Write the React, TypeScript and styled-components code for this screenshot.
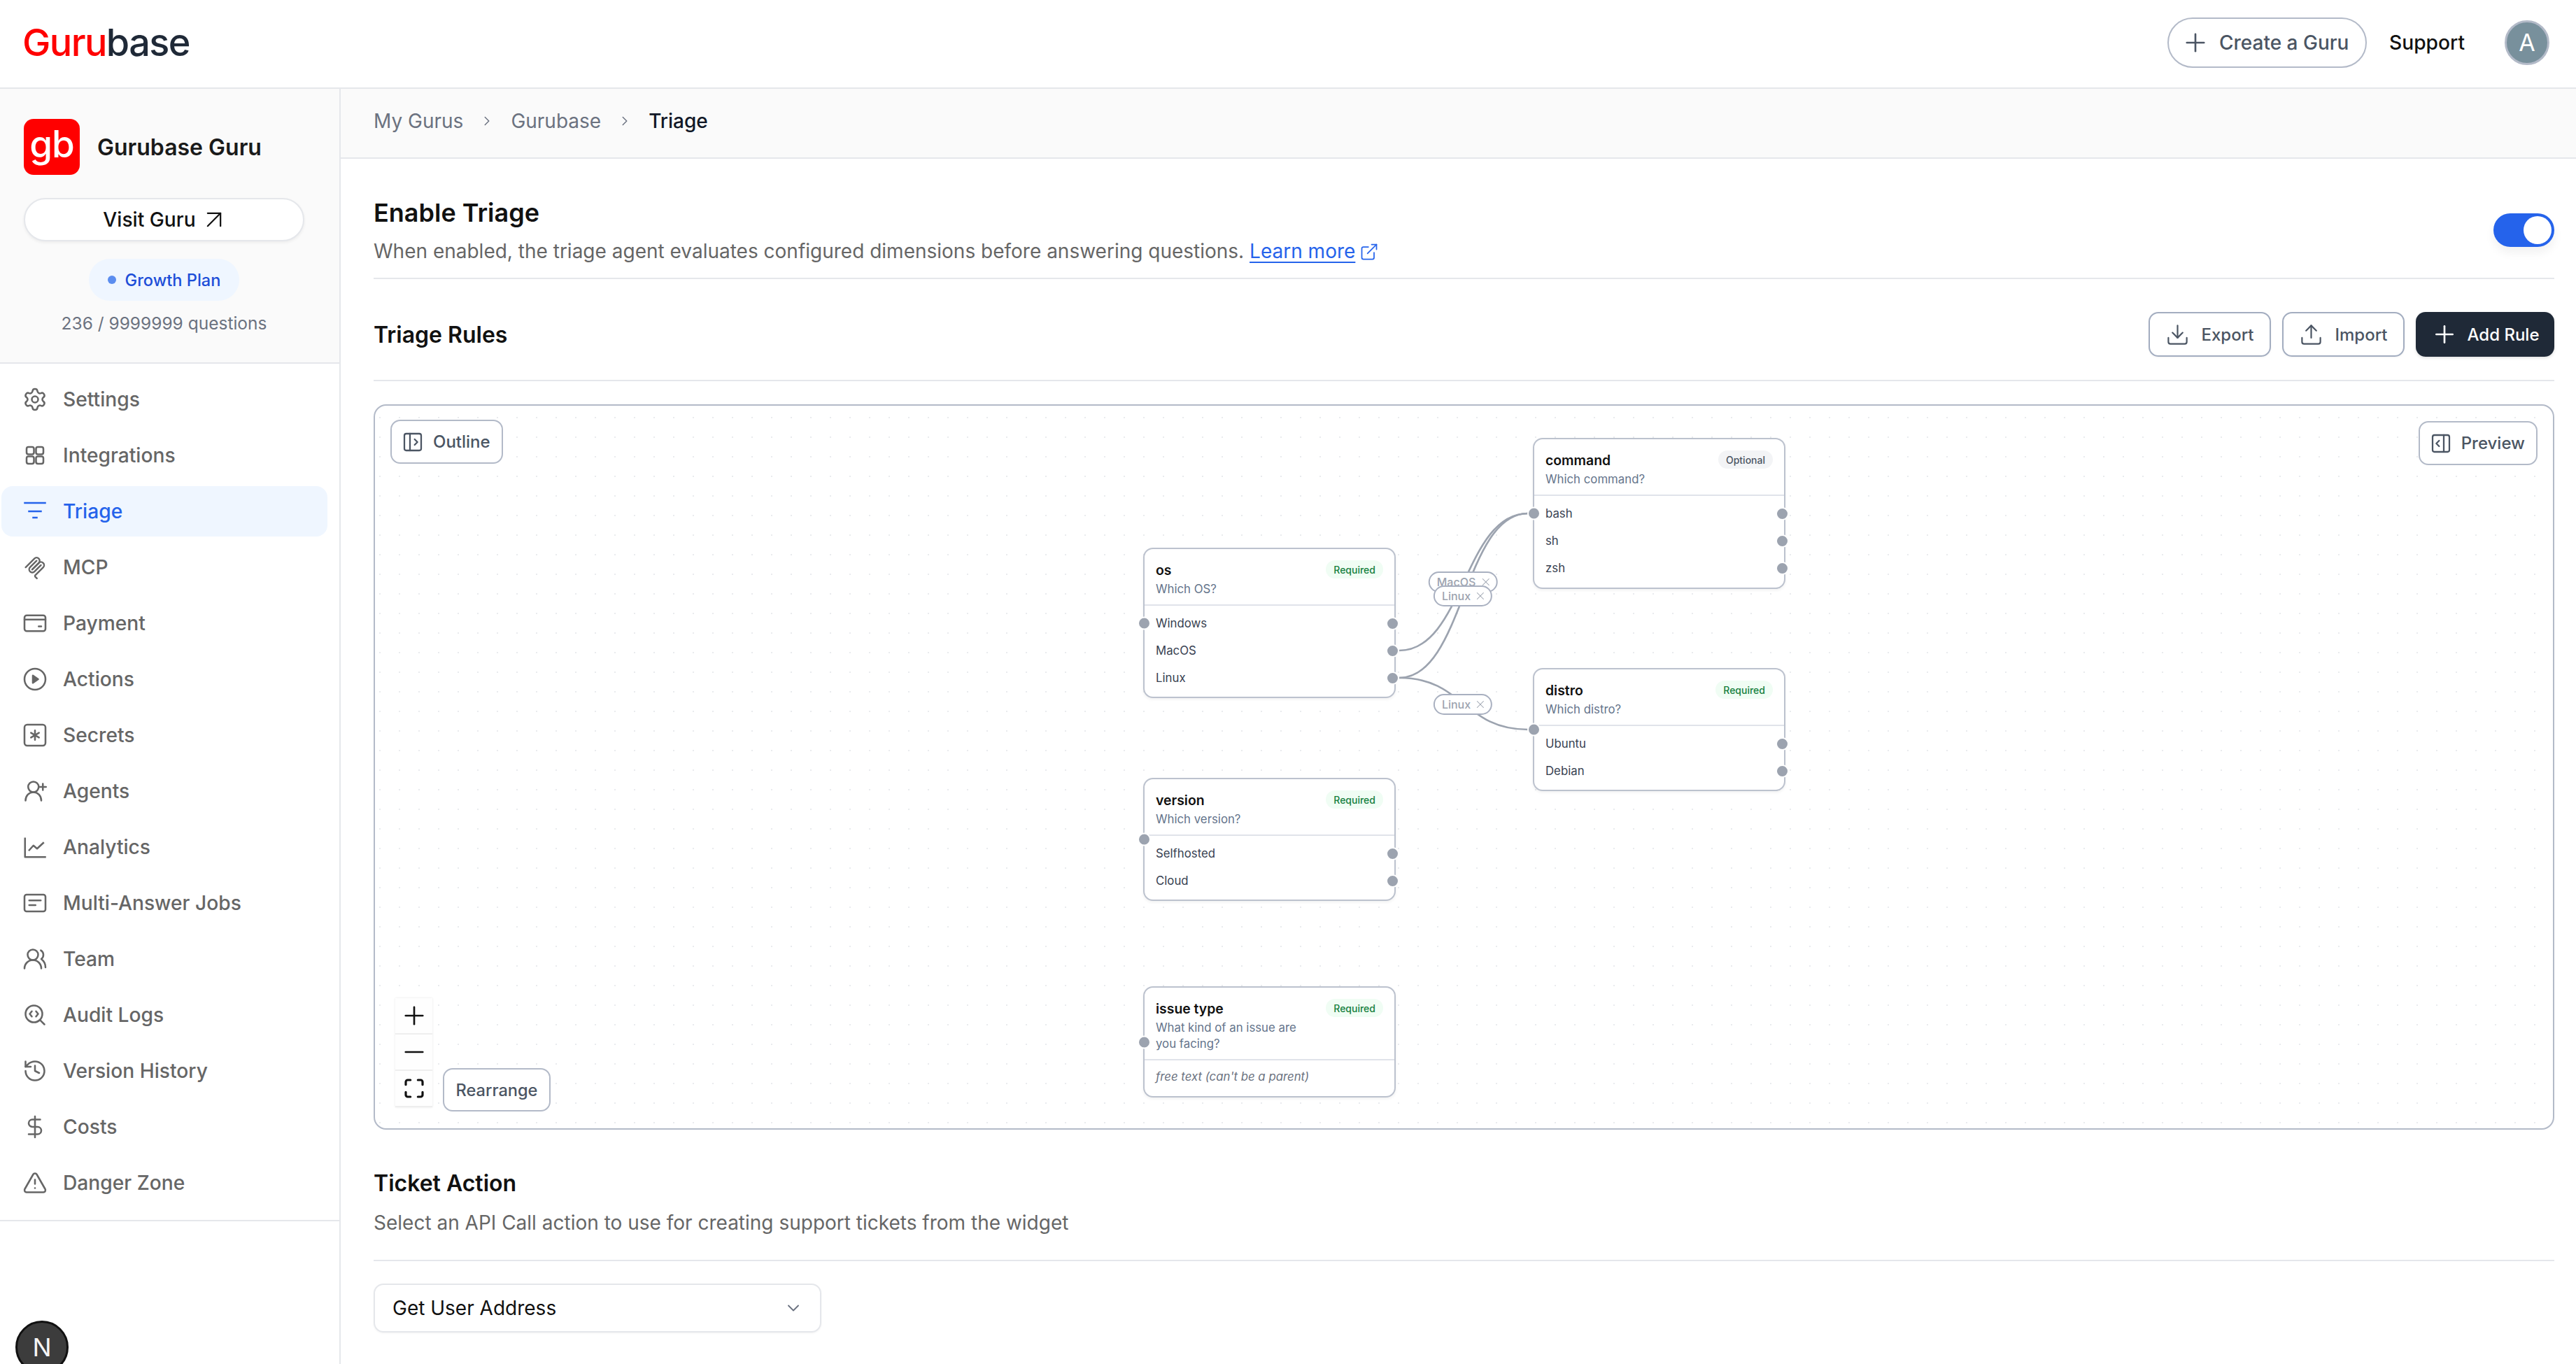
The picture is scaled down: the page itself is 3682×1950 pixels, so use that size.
import styled, { createGlobalStyle } from "styled-components";
import {
  ArrowUpRight,
  ChevronDown,
  ChevronRight,
  DollarSign,
  Download,
  ExternalLink,
  History,
  Minus,
  PanelLeftOpen,
  PanelRightOpen,
  Plus,
  SearchCode,
  Settings,
  TriangleAlert,
  Upload,
  UsersRound,
  X,
} from "lucide-react";

const NAV_STROKE = 1.7;

const GridIcon = () => (
  <svg viewBox="0 0 24 24" fill="none" stroke="currentColor" strokeWidth={NAV_STROKE}>
    <rect x="4" y="4" width="7" height="7" rx="1.8" />
    <rect x="13" y="4" width="7" height="7" rx="1.8" />
    <rect x="4" y="13" width="7" height="7" rx="1.8" />
    <rect x="13" y="13" width="7" height="7" rx="1.8" />
  </svg>
);

const FilterIcon = () => (
  <svg viewBox="0 0 24 24" fill="none" stroke="currentColor" strokeWidth={NAV_STROKE}>
    <path d="M1.5 4h21M5.5 12h13M9.5 18h5" />
  </svg>
);

const McpIcon = () => (
  <svg viewBox="0 0 195 195" fill="none" stroke="currentColor" strokeWidth="13" strokeLinecap="round">
    <path d="M25 97.85L92.88 29.97C102.25 20.6 117.45 20.6 126.82 29.97C136.2 39.34 136.2 54.54 126.82 63.91L75.56 115.18" />
    <path d="M76.27 114.47L126.82 63.91C136.2 54.54 151.39 54.54 160.77 63.91L161.12 64.27C170.49 73.64 170.49 88.83 161.12 98.21L99.72 159.6C96.6 162.72 96.6 167.79 99.72 170.91L112.33 183.52" />
    <path d="M109.85 46.94L59.65 97.15C50.28 106.52 50.28 121.71 59.65 131.09C69.02 140.46 84.22 140.46 93.59 131.09L143.79 80.88" />
  </svg>
);

const WalletIcon = () => (
  <svg viewBox="0 0 24 24" fill="none" stroke="currentColor" strokeWidth={NAV_STROKE} strokeLinecap="round">
    <rect x="2" y="4.5" width="20" height="15" rx="2.2" />
    <path d="M2 8.5h20M15.5 15h2.5" />
  </svg>
);

const PlayIcon = () => (
  <svg viewBox="0 0 24 24" fill="none" stroke="currentColor" strokeWidth={NAV_STROKE} strokeLinejoin="round">
    <circle cx="12" cy="12" r="10" />
    <path d="M10 8.5l5 3.5-5 3.5z" fill="currentColor" />
  </svg>
);

const SecretIcon = () => (
  <svg viewBox="0 0 24 24" fill="none" stroke="currentColor" strokeWidth={NAV_STROKE} strokeLinecap="round">
    <rect x="2" y="2" width="20" height="20" rx="2.6" />
    <path d="M12 7.5v9M8.2 9.8l7.6 4.4M15.8 9.8l-7.6 4.4" />
  </svg>
);

const AgentIcon = () => (
  <svg viewBox="0 0 24 24" fill="none" stroke="currentColor" strokeWidth={NAV_STROKE} strokeLinecap="round">
    <circle cx="10.5" cy="8" r="5" />
    <path d="M3 21c0-4.5 3.4-8 7.5-8s7.5 3.5 7.5 8M19.5 5v6M16.5 8h6" />
  </svg>
);

const ChartIcon = () => (
  <svg viewBox="0 0 24 24" fill="none" stroke="currentColor" strokeWidth={NAV_STROKE} strokeLinejoin="round">
    <path d="M2.5 3v18.5h20" />
    <path d="M6 15.5l4.5-5 3.5 3 6.5-6" />
  </svg>
);

const JobsIcon = () => (
  <svg viewBox="0 0 24 24" fill="none" stroke="currentColor" strokeWidth={NAV_STROKE} strokeLinecap="round">
    <rect x="2" y="4" width="20" height="16" rx="2" />
    <path d="M6.5 9.5h11M6.5 14h6" />
  </svg>
);

const FocusIcon = () => (
  <svg viewBox="0 0 24 24" width="32" height="32" fill="none" stroke="currentColor" strokeWidth="2.4" strokeLinecap="round">
    <path d="M3 8V5a2 2 0 0 1 2-2h3M16 3h3a2 2 0 0 1 2 2v3M21 16v3a2 2 0 0 1-2 2h-3M8 21H5a2 2 0 0 1-2-2v-3" />
  </svg>
);

const navItems = [
  { label: "Settings", icon: <Settings strokeWidth={NAV_STROKE} /> },
  { label: "Integrations", icon: <GridIcon /> },
  { label: "Triage", icon: <FilterIcon />, active: true },
  { label: "MCP", icon: <McpIcon /> },
  { label: "Payment", icon: <WalletIcon /> },
  { label: "Actions", icon: <PlayIcon /> },
  { label: "Secrets", icon: <SecretIcon /> },
  { label: "Agents", icon: <AgentIcon /> },
  { label: "Analytics", icon: <ChartIcon /> },
  { label: "Multi-Answer Jobs", icon: <JobsIcon /> },
  { label: "Team", icon: <UsersRound strokeWidth={NAV_STROKE} /> },
  { label: "Audit Logs", icon: <SearchCode strokeWidth={NAV_STROKE} /> },
  { label: "Version History", icon: <History strokeWidth={NAV_STROKE} /> },
  { label: "Costs", icon: <DollarSign strokeWidth={NAV_STROKE} /> },
  { label: "Danger Zone", icon: <TriangleAlert strokeWidth={NAV_STROKE} /> },
];

// the canvas inner box starts at page x 536, y 580
const CANVAS_X = 536;
const CANVAS_Y = 580;

const nodes = [
  { name: "os", question: "Which OS?", badge: "Required", x: 1634, y: 783, h: 215, options: ["Windows", "MacOS", "Linux"] },
  { name: "command", question: "Which command?", badge: "Optional", x: 2191, y: 626, h: 216, options: ["bash", "sh", "zsh"] },
  { name: "distro", question: "Which distro?", badge: "Required", x: 2191, y: 955, h: 176, options: ["Ubuntu", "Debian"] },
  { name: "version", question: "Which version?", badge: "Required", x: 1634, y: 1112, h: 176, options: ["Selfhosted", "Cloud"] },
  { name: "issue type", question: "What kind of an issue are you facing?", badge: "Required", x: 1634, y: 1410, h: 159, options: [] },
];

const edges = [
  "M2000 930C2092 930 2092 734 2184 734",
  "M2000 969C2092 969 2092 734 2184 734",
  "M2000 969C2092 969 2092 1043 2184 1043",
];

const edgeLabels = [
  { text: "MacOS", x: 2091, y: 832 },
  { text: "Linux", x: 2091, y: 852 },
  { text: "Linux", x: 2091, y: 1007 },
];

export default function App() {
  return (
    <>
      <GlobalStyle />
      <Page>
        <TopBar>
          <Logo>
            <span>Guru</span>base
          </Logo>
          <TopActions>
            <CreateButton>
              <Plus size={42} strokeWidth={1.5} />
              Create a Guru
            </CreateButton>
            <SupportLink>Support</SupportLink>
            <Avatar>A</Avatar>
          </TopActions>
        </TopBar>

        <Body>
          <Sidebar>
            <GuruCard>
              <GuruHead>
                <GuruMark>gb</GuruMark>
                <GuruName>Gurubase Guru</GuruName>
              </GuruHead>
              <VisitButton>
                Visit Guru
                <ArrowUpRight size={44} strokeWidth={1.2} />
              </VisitButton>
              <PlanPill>
                <PlanDot />
                Growth Plan
              </PlanPill>
              <Usage>236 / 9999999 questions</Usage>
            </GuruCard>

            <NavList>
              {navItems.map((item) => (
                <NavRow key={item.label} $active={item.active}>
                  <NavIcon>{item.icon}</NavIcon>
                  {item.label}
                </NavRow>
              ))}
            </NavList>

            <DevBadge>N</DevBadge>
          </Sidebar>

          <Main>
            <Breadcrumbs>
              <Crumb>My Gurus</Crumb>
              <ChevronRight size={22} strokeWidth={1.6} />
              <Crumb>Gurubase</Crumb>
              <ChevronRight size={22} strokeWidth={1.6} />
              <Crumb $current>Triage</Crumb>
            </Breadcrumbs>

            <Content>
              <EnableRow>
                <div>
                  <EnableTitle>Enable Triage</EnableTitle>
                  <Description>
                    When enabled, the triage agent evaluates configured dimensions before answering questions.{" "}
                    <LearnMore>Learn more</LearnMore>
                    <ExternalLink size={28} strokeWidth={1.5} color="#2563eb" />
                  </Description>
                </div>
                <Toggle>
                  <Knob />
                </Toggle>
              </EnableRow>

              <RulesRow>
                <SectionTitle>Triage Rules</SectionTitle>
                <RulesActions>
                  <OutlineButton>
                    <Download size={35} strokeWidth={1.5} />
                    Export
                  </OutlineButton>
                  <OutlineButton>
                    <Upload size={35} strokeWidth={1.5} />
                    Import
                  </OutlineButton>
                  <AddButton>
                    <Plus size={40} strokeWidth={1.6} />
                    Add Rule
                  </AddButton>
                </RulesActions>
              </RulesRow>

              <Canvas>
                <EdgeLayer viewBox={`${CANVAS_X} ${CANVAS_Y} 3113 1033`}>
                  {edges.map((d) => (
                    <path key={d} d={d} />
                  ))}
                </EdgeLayer>

                <PanelButton $left={22} $top={20}>
                  <PanelLeftOpen size={32} strokeWidth={1.7} />
                  Outline
                </PanelButton>
                <PanelButton $right={22} $top={22}>
                  <PanelRightOpen size={32} strokeWidth={1.7} />
                  Preview
                </PanelButton>

                {edgeLabels.map((label) => (
                  <EdgeLabel key={label.text + label.y} $x={label.x - CANVAS_X} $y={label.y - CANVAS_Y}>
                    {label.text}
                    <X size={18} strokeWidth={1.4} />
                  </EdgeLabel>
                ))}

                {nodes.map((node) => (
                  <Node key={node.name} $x={node.x - CANVAS_X} $y={node.y - CANVAS_Y} $h={node.h}>
                    <NodeHead>
                      <NodeTitleRow>
                        <NodeName>{node.name}</NodeName>
                        <NodeBadge $required={node.badge === "Required"}>{node.badge}</NodeBadge>
                      </NodeTitleRow>
                      <NodeQuestion>{node.question}</NodeQuestion>
                    </NodeHead>
                    <NodeBody>
                      {node.options.map((option) => (
                        <NodeOption key={option}>
                          {option}
                          <Handle $side="right" />
                        </NodeOption>
                      ))}
                      {node.options.length === 0 && <FreeText>free text (can't be a parent)</FreeText>}
                    </NodeBody>
                    <Handle $side="left" />
                  </Node>
                ))}

                <ZoomControls>
                  <ZoomButton>
                    <Plus size={42} strokeWidth={1.5} />
                  </ZoomButton>
                  <ZoomButton>
                    <Minus size={42} strokeWidth={1.5} />
                  </ZoomButton>
                  <ZoomButton>
                    <FocusIcon />
                  </ZoomButton>
                </ZoomControls>
                <RearrangeButton>Rearrange</RearrangeButton>
              </Canvas>

              <TicketSection>
                <SectionTitle>Ticket Action</SectionTitle>
                <TicketDescription>Select an API Call action to use for creating support tickets from the widget</TicketDescription>
              </TicketSection>

              <SelectBox>
                Get User Address
                <ChevronDown size={28} strokeWidth={1.6} color="#6b7280" />
              </SelectBox>
            </Content>
          </Main>
        </Body>
      </Page>
    </>
  );
}

const GlobalStyle = createGlobalStyle`
  html, body {
    margin: 0;
    background: #fff;
    font-family: Inter, "Liberation Sans", sans-serif;
    color: #111827;
  }
  * { box-sizing: border-box; }
`;

const Page = styled.div`
  width: 3682px;
  height: 1950px;
  overflow: hidden;
  display: flex;
  flex-direction: column;
`;

const TopBar = styled.header`
  height: 127px;
  flex: none;
  display: flex;
  justify-content: space-between;
  align-items: center;
  padding: 0 31px 4px 32px;
  border-bottom: 2px solid #e5e7eb;
`;

const Logo = styled.div`
  font-size: 54px;
  font-weight: 500;
  letter-spacing: -1.6px;
  color: #1f2937;

  span {
    color: #ff0000;
  }
`;

const TopActions = styled.div`
  display: flex;
  align-items: center;
`;

const CreateButton = styled.div`
  height: 72px;
  width: 285px;
  display: flex;
  align-items: center;
  gap: 13px;
  padding-left: 17px;
  border: 2px solid #b3bac8;
  border-radius: 36px;
  font-size: 28px;
  font-weight: 500;
  color: #4b5563;
`;

const SupportLink = styled.div`
  margin-left: 32px;
  font-size: 28.2px;
  font-weight: 500;
  color: #111;
`;

const Avatar = styled.div`
  width: 64px;
  height: 64px;
  margin-left: 57px;
  margin-right: 7px;
  border-radius: 50%;
  background: #78909c;
  border: 3px solid #b3bac8;
  color: #fff;
  font-size: 34px;
  display: flex;
  align-items: center;
  justify-content: center;
`;

const Body = styled.div`
  flex: 1;
  display: flex;
  min-height: 0;
`;

const Sidebar = styled.aside`
  width: 487px;
  flex: none;
  position: relative;
  border-right: 2px solid #e5e7eb;
`;

const GuruCard = styled.section`
  height: 393px;
  padding: 43px 50px 0 34px;
  background: #fafafa;
  border-bottom: 2px solid #e5e7eb;
  display: flex;
  flex-direction: column;
  align-items: center;
`;

const GuruHead = styled.div`
  align-self: flex-start;
  display: flex;
  align-items: center;
  gap: 25px;
`;

const GuruMark = styled.div`
  width: 80px;
  height: 80px;
  border-radius: 14px;
  background: #ff0000;
  color: #fff;
  font-size: 53px;
  font-weight: 500;
  letter-spacing: -1px;
  display: flex;
  align-items: center;
  justify-content: center;
  padding-bottom: 8px;
`;

const GuruName = styled.div`
  font-size: 32px;
  font-weight: 600;
  color: #1a1a1a;
`;

const VisitButton = styled.div`
  align-self: stretch;
  height: 62px;
  margin-top: 33px;
  padding-left: 6px;
  display: flex;
  align-items: center;
  justify-content: center;
  gap: 4px;
  background: #fff;
  border: 2px solid #e5e7eb;
  border-radius: 31px;
  box-shadow: 0 2px 4px rgba(0, 0, 0, 0.06);
  font-size: 28.2px;
  font-weight: 500;
  color: #111;
`;

const PlanPill = styled.div`
  height: 60px;
  margin-top: 25px;
  padding: 0 27px;
  display: flex;
  align-items: center;
  gap: 13px;
  border-radius: 30px;
  background: #eff6ff;
  font-size: 23.6px;
  font-weight: 500;
  color: #1d4ed8;
`;

const PlanDot = styled.span`
  width: 12px;
  height: 12px;
  border-radius: 50%;
  background: #5b8def;
`;

const Usage = styled.div`
  margin-top: 17px;
  font-size: 24.5px;
  color: #6b7280;
`;

const NavList = styled.nav`
  padding: 15px 17px 17px 2px;
  border-bottom: 2px solid #e5e7eb;
  display: flex;
  flex-direction: column;
  gap: 8px;
`;

const NavRow = styled.div<{ $active?: boolean }>`
  height: 72px;
  padding-left: 30px;
  display: flex;
  align-items: center;
  gap: 22px;
  border-radius: 16px;
  font-size: 28.2px;
  font-weight: 500;
  background: ${(p) => (p.$active ? "#eff6ff" : "transparent")};
  color: ${(p) => (p.$active ? "#2563eb" : "#666")};
`;

const NavIcon = styled.span`
  width: 36px;
  height: 36px;
  display: flex;

  svg {
    width: 100%;
    height: 100%;
  }
`;

const DevBadge = styled.div`
  position: absolute;
  left: 22px;
  top: 1761px;
  width: 76px;
  height: 76px;
  border-radius: 50%;
  background: #3c3c3c;
  border: 3px solid #111;
  color: #f4f4f4;
  font-size: 36px;
  display: flex;
  align-items: center;
  justify-content: center;
`;

const Main = styled.main`
  flex: 1;
  min-width: 0;
`;

const Breadcrumbs = styled.div`
  height: 100px;
  padding: 0 0 6px 47px;
  display: flex;
  align-items: center;
  gap: 23px;
  background: #fafafa;
  border-bottom: 2px solid #e5e7eb;
  color: #6b7280;
`;

const Crumb = styled.span<{ $current?: boolean }>`
  font-size: 28px;
  color: ${(p) => (p.$current ? "#111827" : "#6b7280")};
  font-weight: ${(p) => (p.$current ? 500 : 400)};
`;

const Content = styled.div`
  padding: 55px 31px 0 47px;
`;

const EnableRow = styled.div`
  display: flex;
  justify-content: space-between;
  align-items: flex-start;
  height: 117px;
  border-bottom: 2px solid #e5e7eb;
`;

const EnableTitle = styled.h2`
  margin: 0 0 10px;
  font-size: 36px;
  line-height: 44px;
  font-weight: 600;
  color: #111;
`;

const Description = styled.p`
  margin: 0;
  font-size: 28px;
  line-height: 46px;
  color: #666;

  svg {
    margin-left: 6px;
    vertical-align: -5px;
  }
`;

const LearnMore = styled.span`
  color: #2563eb;
  text-decoration: underline;
  text-underline-offset: 5px;
`;

const Toggle = styled.div`
  width: 87px;
  height: 48px;
  margin-top: 23px;
  padding: 4px;
  border-radius: 24px;
  background: #2563eb;
  display: flex;
  justify-content: flex-end;
  box-shadow: 0 8px 14px rgba(0, 0, 0, 0.06);
`;

const Knob = styled.span`
  width: 40px;
  height: 40px;
  border-radius: 50%;
  background: #fff;
`;

const RulesRow = styled.div`
  height: 146px;
  padding-top: 47px;
  padding-bottom: 33px;
  display: flex;
  justify-content: space-between;
  align-items: center;
  border-bottom: 2px solid #e5e7eb;
`;

const SectionTitle = styled.h3`
  margin: 0;
  font-size: 32px;
  line-height: 39px;
  font-weight: 600;
  color: #111;
`;

const RulesActions = styled.div`
  display: flex;
  gap: 16px;
`;

const OutlineButton = styled.div`
  width: 175px;
  height: 64px;
  display: flex;
  align-items: center;
  justify-content: center;
  gap: 16px;
  border: 2px solid #a3adc0;
  border-radius: 14px;
  box-shadow: 0 1px 3px rgba(0, 0, 0, 0.05);
  font-size: 24px;
  font-weight: 500;
  color: #4b5563;
`;

const AddButton = styled.div`
  width: 198px;
  height: 64px;
  display: flex;
  align-items: center;
  justify-content: center;
  gap: 12px;
  border-radius: 14px;
  background: #1f2937;
  box-shadow: 0 2px 4px rgba(0, 0, 0, 0.12);
  font-size: 24px;
  font-weight: 500;
  color: #fff;
`;

const Canvas = styled.div`
  position: relative;
  height: 1037px;
  margin-top: 33px;
  border: 2px solid #b3bac8;
  border-radius: 18px;
  overflow: hidden;
  background-color: #fff;
  background-image: radial-gradient(circle, #e9ebee 1px, transparent 1.4px);
  background-size: 28px 28px;
  background-position: -7px 3px;
`;

const EdgeLayer = styled.svg`
  position: absolute;
  left: 0;
  top: 0;
  width: 3113px;
  height: 1033px;

  path {
    fill: none;
    stroke: #9ca3af;
    stroke-width: 2.6;
  }
`;

const PanelButton = styled.div<{ $left?: number; $right?: number; $top: number }>`
  position: absolute;
  top: ${(p) => p.$top}px;
  ${(p) => (p.$left !== undefined ? `left: ${p.$left}px;` : "")}
  ${(p) => (p.$right !== undefined ? `right: ${p.$right}px;` : "")}
  height: 63px;
  padding: 0 16px 0 14px;
  display: flex;
  align-items: center;
  gap: 13px;
  background: #fff;
  border: 2px solid #b3bac8;
  border-radius: 14px;
  font-size: 24px;
  font-weight: 500;
  color: #4b5563;
`;

const EdgeLabel = styled.div<{ $x: number; $y: number }>`
  position: absolute;
  left: ${(p) => p.$x}px;
  top: ${(p) => p.$y}px;
  transform: translate(-50%, -50%);
  height: 30px;
  padding: 0 6px 0 10px;
  display: flex;
  align-items: center;
  gap: 5px;
  background: #fff;
  border: 2px solid #a9b0c0;
  border-radius: 15px;
  font-size: 16px;
  font-weight: 500;
  color: #9ca3af;
`;

const Node = styled.div<{ $x: number; $y: number; $h: number }>`
  position: absolute;
  left: ${(p) => p.$x}px;
  top: ${(p) => p.$y}px;
  width: 361px;
  height: ${(p) => p.$h}px;
  background: #fff;
  border: 2px solid #bcc2ce;
  border-radius: 14px;
  box-shadow: 0 2px 4px rgba(0, 0, 0, 0.06);
`;

const NodeHead = styled.div`
  padding: 14px 16px 10px 16px;
  border-bottom: 2px solid #e0e3ea;
`;

const NodeTitleRow = styled.div`
  display: flex;
  justify-content: space-between;
  align-items: flex-start;
  height: 32px;
`;

const NodeName = styled.div`
  font-size: 19.4px;
  line-height: 32px;
  font-weight: 600;
  color: #111;
`;

const NodeBadge = styled.div<{ $required: boolean }>`
  height: 26px;
  margin-top: 2px;
  padding: 0 11px;
  display: flex;
  align-items: center;
  border-radius: 13px;
  font-size: 14px;
  font-weight: 500;
  background: ${(p) => (p.$required ? "#f0fdf4" : "#f3f4f6")};
  color: ${(p) => (p.$required ? "#15803d" : "#4b5563")};
`;

const NodeQuestion = styled.div`
  max-width: 220px;
  font-size: 16.8px;
  line-height: 23px;
  color: #64748b;
`;

const NodeBody = styled.div`
  padding: 5.5px 16px 0;
`;

const NodeOption = styled.div`
  height: 39px;
  display: flex;
  align-items: center;
  font-size: 16.8px;
  color: #374151;
`;

const FreeText = styled.div`
  padding-top: 2.5px;
  font-size: 16.8px;
  line-height: 30px;
  font-style: italic;
  color: #6b7280;
`;

const Handle = styled.span<{ $side: "left" | "right" }>`
  position: absolute;
  width: 19px;
  height: 19px;
  border-radius: 50%;
  background: #9ca3af;
  border: 2.5px solid #fff;
  ${(p) =>
    p.$side === "left"
      ? "left: -10.5px; top: 50%; transform: translateY(-50%);"
      : "right: -6.5px;"}
`;

const ZoomControls = styled.div`
  position: absolute;
  left: 29px;
  top: 847px;
  display: flex;
  flex-direction: column;
  box-shadow: 0 0 3px rgba(0, 0, 0, 0.1);
`;

const ZoomButton = styled.div`
  width: 53px;
  height: 52px;
  display: flex;
  align-items: center;
  justify-content: center;
  background: #fefefe;
  border-bottom: 2px solid #eee;
  color: #111;
`;

const RearrangeButton = styled.div`
  position: absolute;
  left: 97px;
  top: 947px;
  width: 154px;
  height: 62px;
  display: flex;
  align-items: center;
  justify-content: center;
  background: #fff;
  border: 2px solid #b3bac8;
  border-radius: 14px;
  font-size: 23.6px;
  font-weight: 500;
  color: #4b5563;
`;

const TicketSection = styled.section`
  margin-top: 57px;
  padding-bottom: 33px;
  border-bottom: 2px solid #e5e7eb;
`;

const TicketDescription = styled.p`
  margin: 17px 0 0;
  font-size: 28px;
  line-height: 40px;
  color: #666;
`;

const SelectBox = styled.div`
  width: 640px;
  height: 70px;
  margin-top: 32px;
  padding: 0 24px 0 25px;
  display: flex;
  align-items: center;
  justify-content: space-between;
  border: 2px solid #e5e7eb;
  border-radius: 14px;
  box-shadow: 0 1px 3px rgba(0, 0, 0, 0.05);
  font-size: 28px;
  color: #111;
`;
